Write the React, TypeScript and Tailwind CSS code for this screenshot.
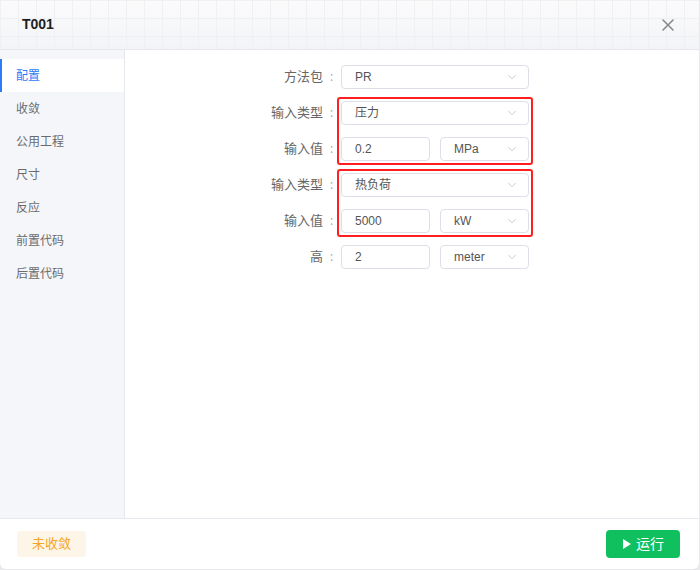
import { ChevronDown } from "lucide-react";

const menu = ["配置", "收敛", "公用工程", "尺寸", "反应", "前置代码", "后置代码"];

const cjk = "font-['Liberation_Sans','Noto_Sans_CJK_SC',sans-serif]";

const Select = ({ value, w = "w-[188px]" }: { value: string; w?: string }) => (
  <div className={`${w} h-6 shrink-0 flex items-center justify-between rounded-[4px] border border-[#dcdfe6] bg-white pl-[13px] pr-[9px]`}>
    <span className={`text-[12px] text-[#555] ${cjk}`}>{value}</span>
    <ChevronDown className="w-[14px] h-[14px] text-[#c0c4cc]" strokeWidth={1.5} />
  </div>
);

const Input = ({ value }: { value: string }) => (
  <div className="w-[89px] h-6 shrink-0 flex items-center rounded-[4px] border border-[#dcdfe6] bg-white pl-[13px]">
    <span className={`text-[12px] text-[#555] ${cjk}`}>{value}</span>
  </div>
);

const Label = ({ text }: { text: string }) => (
  <div className="h-6 flex items-center">
    <span className={`w-[73px] text-right text-[13px] text-[#666] ${cjk}`}>{text}</span>
    <span className="w-[14px] pl-[7px] text-[12px] text-[#aaa]">:</span>
  </div>
);

const ValueRow = ({ value, unit }: { value: string; unit: string }) => (
  <div className="flex gap-[10px]">
    <Input value={value} />
    <Select value={unit} w="w-[89px]" />
  </div>
);

const Group = ({ type, value, unit }: { type: string; value: string; unit: string }) => (
  <div className="flex">
    <div className="flex flex-col gap-3 py-1">
      <Label text="输入类型" />
      <Label text="输入值" />
    </div>
    <div className="flex flex-col gap-3 border-2 border-[#ff1f1f] rounded-[3px] p-[2px]">
      <Select value={type} />
      <ValueRow value={value} unit={unit} />
    </div>
  </div>
);

export default function App() {
  return (
    <div className="w-[700px] h-[570px] bg-[#e9e9ec]">
      <div className="w-[699px] h-[569px] flex flex-col bg-white rounded-b-[6px] overflow-hidden">
        <div className="h-[50px] shrink-0 flex items-center justify-between pl-[22px] pr-[25px] border-b border-[#e6e8ee] bg-[linear-gradient(to_right,#eef0f4_1px,transparent_1px),linear-gradient(to_bottom,#eef0f4_1px,transparent_1px),linear-gradient(to_bottom,#fbfbfc,#f3f4f7)] bg-[size:18px_18px,18px_18px,100%_100%]">
          <span className="text-[14px] font-bold text-[#1f1f1f] font-['Liberation_Sans',sans-serif]">T001</span>
          <svg width="12" height="12" viewBox="0 0 12 12" className="text-[#8a8a8a]">
            <path d="M1 1 11 11M11 1 1 11" stroke="currentColor" strokeWidth="1.6" strokeLinecap="round" />
          </svg>
        </div>

        <div className="flex flex-1 min-h-0">
          <div className="w-[125px] shrink-0 bg-[#f5f6fa] border-r border-[#e6e8ee] pt-[9px]">
            {menu.map((m, i) => (
              <div
                key={m}
                className={`h-[33px] flex items-center pl-4 text-[12px] ${cjk} ${
                  i === 0 ? "bg-white text-[#2d7cf6] border-l-2 border-[#2d7cf6] pl-[14px]" : "text-[#6b6b6b]"
                }`}
              >
                {m}
              </div>
            ))}
          </div>

          <div className="flex-1 pt-[15px] pl-[125px]">
            <div className="flex flex-col">
              <div className="flex">
                <Label text="方法包" />
                <div className="pl-1">
                  <Select value="PR" />
                </div>
              </div>
              <div className="mt-2">
                <Group type="压力" value="0.2" unit="MPa" />
              </div>
              <div className="mt-1">
                <Group type="热负荷" value="5000" unit="kW" />
              </div>
              <div className="flex mt-2">
                <Label text="高" />
                <div className="pl-1">
                  <ValueRow value="2" unit="meter" />
                </div>
              </div>
            </div>
          </div>
        </div>

        <div className="h-[51px] shrink-0 border-t border-[#e6e8ee] flex items-center justify-between pl-[17px] pr-[19px]">
          <div className={`w-[69px] h-[26px] rounded-[4px] bg-[#fdf5e8] flex items-center justify-center text-[13px] text-[#f5a524] ${cjk}`}>
            未收敛
          </div>
          <div className={`w-[74px] h-[28px] rounded-[4px] bg-[#10c05f] flex items-center justify-center gap-[4px] text-[14px] text-white ${cjk}`}>
            <svg width="10" height="12" viewBox="0 0 10 12">
              <path d="M1 1v10l8-5z" fill="white" />
            </svg>
            运行
          </div>
        </div>
      </div>
    </div>
  );
}
